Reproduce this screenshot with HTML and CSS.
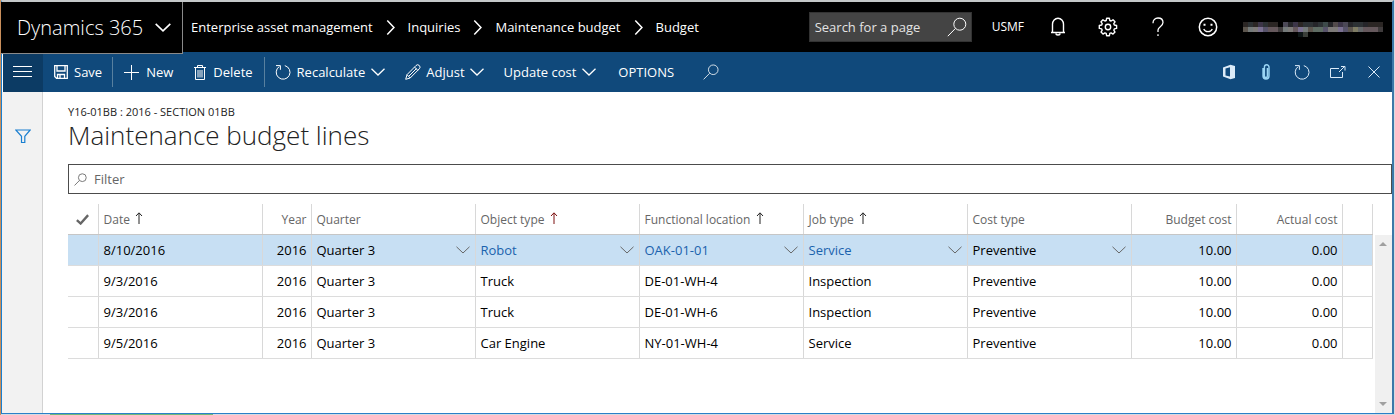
FILE: index.html
```html
<!DOCTYPE html>
<html lang="en">
<head>
<meta charset="utf-8">
<title>Maintenance budget lines</title>
<link rel="stylesheet" href="styles.css">
</head>
<body>
<svg class="defs" aria-hidden="true">
  <symbol id="down" viewBox="0 0 14 8"><path d="M0.5 0.8 7 7 13.5 0.8"/></symbol>
  <symbol id="right" viewBox="0 0 8 14"><path d="M1 0.5 7.2 7 1 13.5"/></symbol>
  <symbol id="search" viewBox="0 0 20 20"><circle cx="12.8" cy="7.2" r="6"/><path d="M8.4 11.5 0.8 19.2"/></symbol>
  <symbol id="refresh" viewBox="0 0 16 16"><path d="M9.8 1.6A6.9 6.9 0 1 1 4.2 2.6M1 1.6h4.4v4.2"/></symbol>
  <symbol id="up" viewBox="0 0 8 12"><path d="M4 12V1M1 4 4 0.8 7 4"/></symbol>
</svg>
<div class="window">
  <header class="topbar">
    <button class="brand">Dynamics 365 <svg class="brand-chev"><use href="#down"/></svg></button>
    <nav class="crumbs" aria-label="Breadcrumb">
      <a href="#">Enterprise asset management</a><svg class="crumb-chev"><use href="#right"/></svg>
      <a href="#">Inquiries</a><svg class="crumb-chev"><use href="#right"/></svg>
      <a href="#">Maintenance budget</a><svg class="crumb-chev"><use href="#right"/></svg>
      <a href="#">Budget</a>
    </nav>
    <div class="page-search">
      <input type="text" placeholder="Search for a page" aria-label="Search for a page">
      <svg class="icon20"><use href="#search"/></svg>
    </div>
    <button class="company">USMF</button>
    <div class="top-icons">
      <button aria-label="Notifications"><svg class="icon20" viewBox="0 0 20 20"><path d="M3 15.500h14M4.500 15V7.200a5.500 6 0 0 1 11 0V15M8 16.500a2 1.500 0 0 0 4 0" stroke-width="1.400"/></svg></button>
      <button aria-label="Settings"><svg class="icon20" viewBox="0 0 20 20"><circle cx="10" cy="10" r="2.700" stroke-width="1.400"/><path stroke-width="1.400" stroke-linejoin="round" d="M8.600 1.300h2.800l.4 2.200 1.300.5 1.900-1.200 2 2-1.200 1.900.5 1.300 2.300.5v2.900l-2.300.5-.5 1.300 1.200 1.900-2 2-1.900-1.200-1.300.5-.4 2.300H8.600l-.4-2.300-1.300-.5L5 17.100l-2-2 1.200-1.900-.5-1.300-2.400-.5V8.500L3.700 8l.5-1.300L3 4.800l2-2L6.900 4l1.300-.5z"/></svg></button>
      <button aria-label="Help"><svg class="icon20" viewBox="0 0 20 20"><path d="M5 6.200C5 3 7 1 10 1s5 1.900 5 4.500c0 4-5 4.300-5 7.500v2M10 17.200v1.800" stroke-width="1.300"/></svg></button>
      <button aria-label="Feedback"><svg class="icon20" viewBox="0 0 20 20"><circle cx="10" cy="10" r="8.700" stroke-width="1.500"/><path d="M5.700 12c1.600 3.600 7 3.600 8.600 0" stroke-width="1.300"/><path d="M6.500 6.700v2M13.500 6.700v2" stroke-width="2"/></svg></button>
    </div>
    <svg class="user" viewBox="0 0 140 15" shape-rendering="crispEdges" role="img" aria-label="Signed-in user">
      <g class="px">
        <path stroke="#2b2624" d="M0 2.500h15M25 2.500h10M55 2.500h5M125 2.500h15"/><path stroke="#3c3548" d="M15 2.500h5M50 2.500h5M95 2.500h5"/>
        <path stroke="#4b4856" d="M40 2.500h5M100 2.500h5"/><path stroke="#2c3134" d="M5 2.500h5M20 2.500h5M60 2.500h10M75 2.500h5M110 2.500h10"/>
        <path stroke="#3d4a4a" d="M80 2.500h5"/><path stroke="#524a4b" d="M90 2.500h5"/><path stroke="#252529" d="M45 2.500h5M70 2.500h5M85 2.500h5M105 2.500h5M120 2.500h5"/>
        <path stroke="#5d564e" d="M0 7.500h5M65 7.500h5M105 7.500h5"/><path stroke="#747a7a" d="M5 7.500h5M40 7.500h5M60 7.500h5"/>
        <path stroke="#7d7a78" d="M10 7.500h5M45 7.500h5M85 7.500h10"/><path stroke="#7a7091" d="M15 7.500h5M55 7.500h5M95 7.500h5"/>
        <path stroke="#57536a" d="M20 7.500h5M80 7.500h5M100 7.500h5"/><path stroke="#65585c" d="M25 7.500h10M50 7.500h5M120 7.500h15"/>
        <path stroke="#3f3b3c" d="M35 7.500h5M135 7.500h5"/><path stroke="#5e6c63" d="M70 7.500h10"/><path stroke="#7e7c64" d="M110 7.500h5"/><path stroke="#65686a" d="M115 7.500h5"/>
        <path stroke="#0d1516" d="M55 12.500h5"/><path stroke="#3a3e39" d="M60 12.500h5"/>
      </g>
    </svg>
  </header>

  <div class="toolbar">
    <button class="menu" aria-label="Menu"><svg class="burger" viewBox="0 0 20 12" shape-rendering="crispEdges"><path d="M0 .5h19M0 5.500h19M0 10.500h19"/></svg></button>
    <button class="cmd save"><svg class="icon14" viewBox="0 0 14 14"><path d="M.7.700h12.600v12.600H2.500L.7 11.500zM3 1v5h8V1M3.500 13V9.500h7V13M6 10v3" stroke-width="1.300"/></svg>Save</button>
    <button class="cmd new"><svg class="icon16" viewBox="0 0 16 16" shape-rendering="crispEdges"><path d="M0 8.500h15M7.500 1v15"/></svg>New</button>
    <button class="cmd delete"><svg class="trash" viewBox="0 0 12 15"><path d="M0 2.500h12M3.500 2.500v-2h5v2M1.500 2.500v12h9v-12M4 5v7.500M6 5v7.500M8 5v7.500"/></svg>Delete</button>
    <button class="cmd recalc"><svg class="icon16"><use href="#refresh"/></svg>Recalculate<svg class="chev"><use href="#down"/></svg></button>
    <button class="cmd adjust"><svg class="icon16" viewBox="0 0 16 16"><path d="M.7 15.300 2 10.700 11 1.500a2 2 0 0 1 3.300 3.300L5.200 14zM2 10.700 5.200 14M9.500 3l3.300 3.400M4 12l7.500-7.500"/></svg>Adjust<svg class="chev"><use href="#down"/></svg></button>
    <button class="cmd update">Update cost<svg class="chev"><use href="#down"/></svg></button>
    <button class="cmd options">OPTIONS</button>
    <button class="cmd" aria-label="Search actions"><svg class="icon16"><use href="#search"/></svg></button>
    <div class="tools">
      <button aria-label="Open in Office"><svg class="icon16" viewBox="0 0 16 16"><path fill="#dcebf8" stroke="none" fill-rule="evenodd" d="M1 3.500 8.500.800 13 2v12l-4.500 1.200L1 12.500zM3.500 4.500v7L8 12.600V3.200z"/></svg></button>
      <button aria-label="Attachments"><svg class="icon16" viewBox="0 0 16 16"><path stroke="#9bd6f5" d="M5 4v8a3 3 0 0 0 6 0V3a2.300 2.300 0 0 0-4.600 0v9a1.500 1.500 0 0 0 3 0V4" stroke-width="1.400"/></svg></button>
      <button aria-label="Refresh"><svg class="icon16"><use href="#refresh"/></svg></button>
      <button aria-label="Open in new window"><svg class="icon16" viewBox="0 0 16 16"><path d="M9 4.500H.5v9h12V8M9 8l5.500-5.500M11 2.500h4v4"/></svg></button>
      <button aria-label="Close"><svg class="icon16" viewBox="0 0 16 16"><path d="m2.500 2.500 11 11M13.500 2.500l-11 11"/></svg></button>
    </div>
  </div>

  <div class="content">
    <aside class="side"><button aria-label="Show filters"><svg class="funnel" viewBox="0 0 16 15"><path d="M.8 1h14.400L9.800 7.300v6.200H6.500V7.300z" stroke-width="1.200"/></svg></button></aside>
    <main class="main">
      <div class="caption">Y16-01BB : 2016 - SECTION 01BB</div>
      <h1>Maintenance budget lines</h1>
      <div class="filter"><svg class="icon-filter"><use href="#search"/></svg><input type="text" placeholder="Filter" aria-label="Filter"></div>
      <div class="grid">
        <table>
          <colgroup><col class="c-check"><col class="c-wide"><col class="c-year"><col class="c-wide"><col class="c-wide"><col class="c-wide"><col class="c-wide"><col class="c-wide"><col class="c-cost"><col class="c-actual"><col></colgroup>
          <thead>
            <tr>
              <th class="check"><svg viewBox="0 0 12 10" role="img" aria-label="Select all"><path d="M.8 5.500 4.300 8.700 11.200 1" stroke-width="2.200"/></svg></th>
              <th>Date <svg class="sort"><use href="#up"/></svg></th>
              <th class="num">Year</th>
              <th>Quarter</th>
              <th>Object type <svg class="sort red"><use href="#up"/></svg></th>
              <th>Functional location <svg class="sort"><use href="#up"/></svg></th>
              <th>Job type <svg class="sort"><use href="#up"/></svg></th>
              <th>Cost type</th>
              <th class="num">Budget cost</th>
              <th class="num">Actual cost</th>
              <th></th>
            </tr>
          </thead>
          <tbody>
            <tr class="selected">
              <td></td><td>8/10/2016</td><td class="num">2016</td>
              <td><div class="combo"><select aria-label="Quarter"><option>Quarter 3</option></select><svg class="chev"><use href="#down"/></svg></div></td>
              <td><div class="combo"><a href="#">Robot</a><button aria-label="Choose object type"><svg class="chev"><use href="#down"/></svg></button></div></td>
              <td><div class="combo"><a href="#">OAK-01-01</a><button aria-label="Choose functional location"><svg class="chev"><use href="#down"/></svg></button></div></td>
              <td><div class="combo"><a href="#">Service</a><button aria-label="Choose job type"><svg class="chev"><use href="#down"/></svg></button></div></td>
              <td><div class="combo"><select aria-label="Cost type"><option>Preventive</option></select><svg class="chev"><use href="#down"/></svg></div></td>
              <td class="num">10.00</td><td class="num">0.00</td><td></td>
            </tr>
            <tr><td></td><td>9/3/2016</td><td class="num">2016</td><td>Quarter 3</td><td>Truck</td><td>DE-01-WH-4</td><td>Inspection</td><td>Preventive</td><td class="num">10.00</td><td class="num">0.00</td><td></td></tr>
            <tr><td></td><td>9/3/2016</td><td class="num">2016</td><td>Quarter 3</td><td>Truck</td><td>DE-01-WH-6</td><td>Inspection</td><td>Preventive</td><td class="num">10.00</td><td class="num">0.00</td><td></td></tr>
            <tr><td></td><td>9/5/2016</td><td class="num">2016</td><td>Quarter 3</td><td>Car Engine</td><td>NY-01-WH-4</td><td>Service</td><td>Preventive</td><td class="num">10.00</td><td class="num">0.00</td><td></td></tr>
          </tbody>
        </table>
        <div class="scroll">
          <button aria-label="Scroll up"><svg viewBox="0 0 8 4"><path d="M0 4 4 0l4 4z"/></svg></button>
          <button aria-label="Scroll down"><svg viewBox="0 0 8 4"><path d="M0 0l4 4 4-4z"/></svg></button>
        </div>
      </div>
    </main>
  </div>
</div>
<div class="backdrop"></div>
</body>
</html>
```
FILE: styles.css
```css
* { box-sizing: border-box; }
body {
  margin: 0;
  min-height: 100vh;
  display: flex;
  flex-direction: column;
  padding-right: 1px;
  background: #d5dbe3;
  border-left: 1px solid #c98f5c;
  font: 13px/20px "Open Sans", "Noto Sans", sans-serif;
  color: #000;
}
button, input, select {
  margin: 0;
  padding: 0;
  border: 0;
  background: none;
  font: inherit;
  color: inherit;
}
a { color: inherit; text-decoration: none; }
svg { display: block; flex: none; fill: none; stroke: currentColor; }
.defs { position: absolute; width: 0; height: 0; }
.icon20 { width: 20px; height: 20px; }
.icon16 { width: 16px; height: 16px; }
.icon14 { width: 14px; height: 14px; }
.chev { width: 14px; height: 8px; stroke-width: 1.3; }

.window {
  flex: 1;
  display: flex;
  flex-direction: column;
  border: 1px solid #2a80c8;
  border-top: 2px solid #c4c8c9;
  border-left-color: #1a7fd0;
  border-right: 2px solid #3c79a8;
  background: #fff;
}

.topbar {
  display: flex;
  align-items: center;
  height: 50px;
  margin-left: -1px;
  background: #000;
  color: #fff;
}
.brand {
  display: flex;
  align-items: center;
  align-self: flex-start;
  gap: 12px;
  width: 182px;
  height: 52px;
  padding-left: 16px;
  border: 1px solid #8a8a8a;
  border-width: 0 1px 1px 0;
  background: #000;
  font-size: 20px;
  font-weight: 300;
  z-index: 1;
}
.brand-chev { width: 16px; height: 9px; stroke-width: 1.4; }
.crumbs { display: flex; align-items: center; gap: 13px; padding-left: 8px; white-space: nowrap; }
.crumb-chev { width: 9px; height: 15px; stroke-width: 1.4; }
.page-search {
  display: flex;
  align-items: center;
  width: 163px;
  height: 30px;
  margin-left: auto;
  padding: 0 4px 0 5px;
  border: 1px solid #333;
  background: #444;
}
.page-search input { flex: 1; min-width: 0; outline: 0; }
.page-search input::placeholder { color: #e3e3e3; opacity: 1; }
.company { margin-left: 20px; font-size: 12px; }
.top-icons { display: flex; gap: 30px; margin-left: 24px; }
.user { width: 140px; height: 15px; margin: 5px 9px 0 25px; }
.px { stroke-width: 5; }

.toolbar {
  display: flex;
  align-items: stretch;
  height: 40px;
  margin-left: 1px;
  background: #10497b;
  color: #fff;
}
.menu { display: grid; place-items: center; width: 40px; background: #0c3b64; }
.burger { width: 20px; height: 12px; }
.cmd { display: flex; align-items: center; gap: 6px; white-space: nowrap; }
.save { position: relative; padding: 0 11px; }
.new { padding: 0 11px; }
.save::after, .recalc::before {
  content: "";
  width: 1px;
  height: 30px;
  background: #58809f;
}
.save::after { position: absolute; right: 0; }
.trash { width: 12px; height: 15px; }
.delete { gap: 7px; padding: 0 11px 0 10px; }
.recalc::before { margin-right: 4px; }
.recalc, .adjust { margin-right: 20px; }
.adjust { gap: 5px; }
.update { margin-right: 22px; }
.options { margin-right: 29px; }
.tools { display: flex; gap: 20px; margin-left: auto; padding-right: 10px; color: #dcebf8; }
.tools button { display: grid; place-items: center; }

.content { flex: 1; display: flex; }
.side {
  width: 41px;
  padding: 37px 0 0 1px;
  border-right: 1px solid #d2d2d2;
  background: #f2f2f2;
  color: #1a7fd0;
}
.side button { display: block; margin: 0 auto; }
.funnel { width: 16px; height: 15px; }
.main { flex: 1; min-width: 0; display: flex; flex-direction: column; padding: 12px 0 0 25px; }
.caption { font-size: 11px; line-height: 16px; color: #222; }
h1 { margin: 0; font-size: 26px; line-height: 30px; font-weight: 300; color: #222; }
.filter {
  display: flex;
  align-items: center;
  gap: 7px;
  height: 30px;
  margin-top: 14px;
  padding-left: 5px;
  border: 1px solid #4c4c4c;
}
.icon-filter { width: 13px; height: 13px; color: #777; stroke-width: 1.500; }
.filter input { flex: 1; outline: 0; }
.filter input::placeholder { color: #666; opacity: 1; }

.grid { flex: 1; display: flex; gap: 2px; margin-top: 10px; }
table { flex: 1; align-self: flex-start; width: 0; table-layout: fixed; border-collapse: collapse; border-right: 1px solid #d8d8d8; }
.c-check { width: 30px; }
.c-wide { width: 164px; }
.c-year { width: 49px; }
.c-cost { width: 105px; }
.c-actual { width: 106px; }
th, td {
  height: 31px;
  padding: 0 5px;
  border-left: 1px solid #d8d8d8;
  border-bottom: 1px solid #dcdcdc;
  text-align: left;
  white-space: nowrap;
}
th:first-child, td:first-child { border-left: 0; }
th { height: 30px; padding-top: 2px; font-size: 12px; font-weight: 400; color: #666; border-bottom-color: #c6c6c6; }
.num { text-align: right; padding-right: 4px; }
.check svg { width: 13px; height: 11px; margin: 0 auto; }
.sort { display: inline-block; width: 8px; height: 12px; margin-left: 2px; color: #222; }
.red { color: #7c1010; }
.selected { background: #c7dff3; }
.combo { display: flex; align-items: center; justify-content: space-between; }
.combo select { flex: 1; appearance: none; }
.combo .chev { color: #666; stroke-width: 1; }
.combo a { color: #1a62ad; }
.scroll {
  display: flex;
  flex-direction: column;
  justify-content: space-between;
  width: 17px;
  margin-top: 31px;
  padding: 7px 4px;
  background: #f0f0f0;
}
.scroll button { display: block; }
.scroll svg { width: 8px; height: 4px; fill: #a0a0a0; stroke: none; }

.backdrop { width: 163px; height: 1px; margin-left: 49px; background: #72b879; }
```
